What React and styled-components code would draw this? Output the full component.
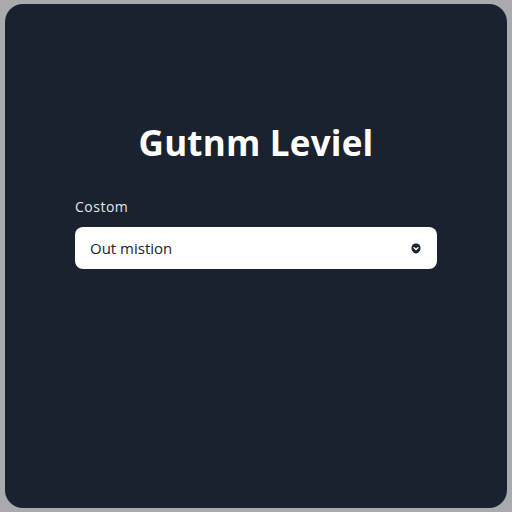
import React from "react"
import styled, { createGlobalStyle } from "styled-components"

const GlobalStyle = createGlobalStyle`
	html, body {
		margin: 0;
		padding: 0;
		background: #a9aaae;
	}
	body {
		font-family: "Open Sans", "Liberation Sans", sans-serif;
	}
`

const Page = styled.div`
	width: 512px;
	height: 512px;
	padding: 4px 5px 4px 5px;
	box-sizing: border-box;
	display: flex;
`

const Card = styled.div`
	flex: 1;
	background: #1a2230;
	border-radius: 18px;
	display: flex;
	flex-direction: column;
	align-items: center;
	padding-top: 116px;
`

const Title = styled.h1`
	margin: 0;
	color: #ffffff;
	font-family: "Open Sans", sans-serif;
	font-weight: 700;
	font-size: 35px;
	letter-spacing: 0.2px;
	line-height: 46px;
`

const Field = styled.div`
	width: 362px;
	margin-top: 32px;
	display: flex;
	flex-direction: column;
	gap: 11px;
`

const Label = styled.label`
	color: #e4e6ea;
	font-size: 14px;
	letter-spacing: 0.5px;
	line-height: 18px;
	font-family: "Open Sans", sans-serif;
	font-weight: 400;
`

const Select = styled.div`
	height: 42px;
	background: #ffffff;
	border-radius: 8px;
	display: flex;
	align-items: center;
	justify-content: space-between;
	padding: 0 16px 0 15px;
	color: #1a2230;
	font-size: 15px;
	font-family: "Open Sans", sans-serif;
`

const Caret = () => (
	<svg width="10" height="11" viewBox="0 0 10 11">
		<path d="M5 0.5 C8 0.5 9.5 2.5 9.5 5 C9.5 7.5 7.5 10.5 5 10.5 C2.5 10.5 0.5 7.5 0.5 5 C0.5 2.5 2 0.5 5 0.5 Z" fill="#1a2230" />
		<path d="M2.6 4.2 L5 6.6 L7.4 4.2" stroke="#ffffff" strokeWidth="1.4" fill="none" />
	</svg>
)

const App = () => {
	return (
		<Page>
			<GlobalStyle />
			<Card>
				<Title>Gutnm Leviel</Title>
				<Field>
					<Label>Costom</Label>
					<Select>
						<span>Out mistion</span>
						<Caret />
					</Select>
				</Field>
			</Card>
		</Page>
	)
}

export default App
